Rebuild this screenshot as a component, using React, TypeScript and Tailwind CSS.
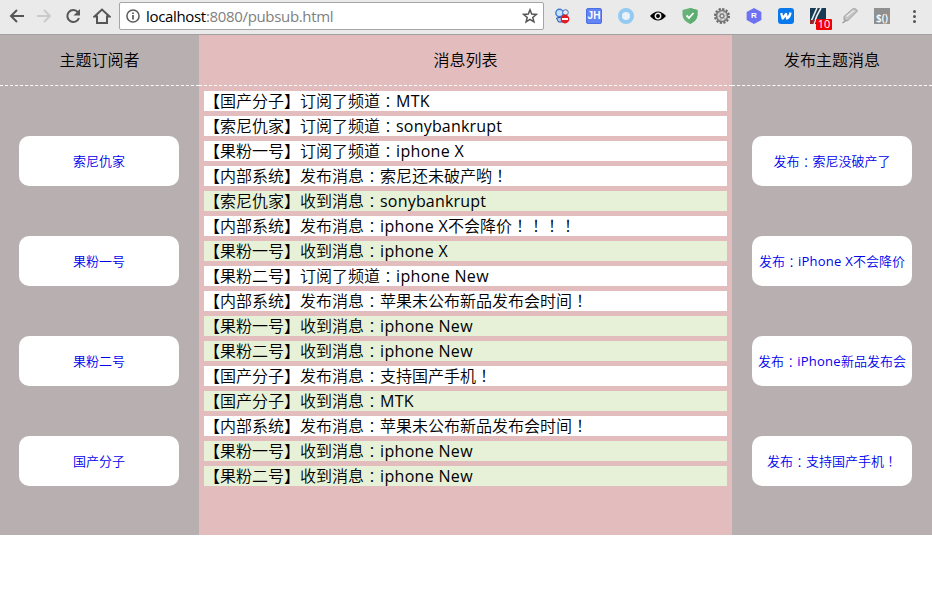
import { Fragment } from "react";

const subscribers = ["索尼仇家", "果粉一号", "果粉二号", "国产分子"];

const publishers = [
  "发布：索尼没破产了",
  "发布：iPhone X不会降价",
  "发布：iPhone新品发布会",
  "发布：支持国产手机！",
];

const messages = [
  "【国产分子】订阅了频道：MTK",
  "【索尼仇家】订阅了频道：sonybankrupt",
  "【果粉一号】订阅了频道：iphone X",
  "【内部系统】发布消息：索尼还未破产哟！",
  "【索尼仇家】收到消息：sonybankrupt",
  "【内部系统】发布消息：iphone X不会降价！！！！",
  "【果粉一号】收到消息：iphone X",
  "【果粉二号】订阅了频道：iphone New",
  "【内部系统】发布消息：苹果未公布新品发布会时间！",
  "【果粉一号】收到消息：iphone New",
  "【果粉二号】收到消息：iphone New",
  "【国产分子】发布消息：支持国产手机！",
  "【国产分子】收到消息：MTK",
  "【内部系统】发布消息：苹果未公布新品发布会时间！",
  "【果粉一号】收到消息：iphone New",
  "【果粉二号】收到消息：iphone New",
];

// Latin runs use a humanist sans; full-width punctuation is centred in its cell.
function Mixed({ text }: { text: string }) {
  return (
    <>
      {text.split(/([A-Za-z ]+|：|！+)/).map((part, i) => {
        if (/^[A-Za-z ]/.test(part)) {
          return (
            <span
              key={i}
              className={`font-['Open_Sans','Noto_Sans',sans-serif] font-normal ${/[A-Z]/.test(part) ? "tracking-[0.02em]" : "tracking-[0.012em]"}`}
            >
              {part}
            </span>
          );
        }
        if (/^[：！]/.test(part)) {
          return (
            <span
              key={i}
              className={`font-['Noto_Sans_CJK_TC',sans-serif] ${part === "：" ? "relative top-px font-light" : ""}`}
            >
              {part}
            </span>
          );
        }
        return <Fragment key={i}>{part}</Fragment>;
      })}
    </>
  );
}

function Toolbar() {
  return (
    <header className="flex h-[35px] items-start border-b border-[#a2a2a2] bg-[#eaeaea]">
      <div className="flex h-8 w-[119px] items-center gap-3 pl-2 text-[#555]">
        <svg width="17" height="16" viewBox="0 0 17 16" fill="none" stroke="currentColor" strokeWidth="2">
          <path d="M16 8H3M9 2L3 8l6 6" />
        </svg>
        <svg width="16" height="16" viewBox="0 0 16 16" fill="none" stroke="#cbcbcb" strokeWidth="2">
          <path d="M0 8h13M7 2l6 6-6 6" />
        </svg>
        <svg width="16" height="16" viewBox="0 0 16 16" fill="none" stroke="currentColor" strokeWidth="2">
          <path d="M13 4.2A6 6 0 1 0 14 10" />
          <path d="M15 1v6.5H8.5z" fill="currentColor" stroke="none" />
        </svg>
        <svg width="18" height="16" viewBox="0 0 18 16" fill="none" stroke="currentColor" strokeWidth="2">
          <path d="M1.500 8.500L9 1.500l7.500 7H14V15H4V8.500z" />
        </svg>
      </div>
      <div className="mt-[2px] flex h-7 w-[425px] items-center rounded-[2px] border border-[#a5a5a5] bg-white pl-[6px] pr-[5px]">
        <svg width="14" height="14" viewBox="0 0 14 14" fill="none" stroke="#5a5a5a" strokeWidth="1.500">
          <circle cx="7" cy="7" r="6.100" />
          <path d="M7 6v4.500M7 3.400v1.600" strokeWidth="1.700" />
        </svg>
        <div className="ml-[6px] flex-1 whitespace-nowrap font-['Open_Sans','Noto_Sans',sans-serif] text-[15px] leading-[26px] tracking-[-0.33px] text-[#808080]">
          <span className="text-black">localhost</span>:8080/pubsub.html
        </div>
        <svg width="16" height="16" viewBox="0 0 16 16" fill="none" stroke="#555" strokeWidth="1.500">
          <path d="M8 1.800l1.700 4.300 4.600.3-3.500 3 1.100 4.500L8 11.400 4.100 13.900l1.100-4.500-3.500-3 4.600-.3z" />
        </svg>
      </div>
      <Extensions />
    </header>
  );
}

function Extensions() {
  return (
    <div className="ml-[10px] flex h-8 items-center gap-4">
      <svg width="16" height="16" viewBox="0 0 16 16">
        <path d="M8 9l5-4M6 4l5 0" stroke="#5a78b0" strokeWidth="1.500" />
        <circle cx="5.500" cy="5" r="3.700" fill="#c5e3ff" stroke="#3d78d8" strokeWidth="1.400" />
        <circle cx="11.500" cy="4.500" r="2.800" fill="#dbe9f8" stroke="#4c6ea8" />
        <path d="M2.500 10l2 4h5L8 9z" fill="#a8d2fa" stroke="#25509e" />
        <circle cx="11" cy="11" r="4.400" fill="#e01b24" />
        <path d="M8 11h6" stroke="#fff" strokeWidth="2" />
      </svg>
      <div className="flex size-4 items-center justify-center rounded-[2px] border border-[#4d6fe0] bg-[#6284f4] font-['Liberation_Sans',sans-serif] text-[10px] font-bold leading-none text-white">
        JH
      </div>
      <div className="size-4 rounded-full border-4 border-[#94caf0] bg-[#e8f2f8]" />
      <svg width="16" height="16" viewBox="0 0 16 16">
        <path d="M0 8Q8-1 16 8Q8 17 0 8z" fill="#000" />
        <circle cx="8" cy="8" r="2.700" fill="none" stroke="#eee" strokeWidth="1.500" />
        <circle cx="8" cy="8" r="1.200" fill="#000" />
      </svg>
      <svg width="16" height="16" viewBox="0 0 16 16">
        <path d="M8 0l7.500 2v5Q15 13 8 16Q1 13 .5 7V2z" fill="#67b279" />
        <path d="M8 0l7.500 2v5Q15 13 8 16z" fill="#5bad70" />
        <path d="M4.500 7.500l2.500 2.500L11.500 5" fill="none" stroke="#fff" strokeWidth="1.800" />
      </svg>
      <svg width="16" height="16" viewBox="0 0 16 16">
        <circle cx="8" cy="8" r="7" fill="none" stroke="#666" strokeWidth="2" strokeDasharray="2.200 1.465" />
        <circle cx="8" cy="8" r="5.600" fill="#b4b4b4" stroke="#777" strokeWidth="1.500" />
        <circle cx="8" cy="8" r="3.700" fill="none" stroke="#ddd" strokeWidth="1.500" strokeDasharray="2.500 1.375" />
        <circle cx="8" cy="8" r="2" fill="#ddd" stroke="#666" />
      </svg>
      <div className="flex h-4 w-4 items-center justify-center bg-[#6c72f2] font-['Liberation_Sans',sans-serif] text-[8px] font-bold leading-none text-white [clip-path:polygon(50%_0,96%_25%,96%_75%,50%_100%,4%_75%,4%_25%)]">
        R
      </div>
      <div className="flex size-4 items-center justify-center rounded-[3px] bg-[#0879ed]">
        <svg width="12" height="10" viewBox="0 0 12 10" fill="none" stroke="#fff" strokeWidth="2.300" strokeLinejoin="round">
          <path d="M1.200 2l1.500 5.500L6 3l1 4.500Q10 6 10.500 1.500" />
        </svg>
      </div>
      <div className="relative size-4">
        <svg width="16" height="16" viewBox="0 0 16 16">
          <path d="M0 0h16v16H0z" fill="#173b53" />
          <path d="M0 16Q3 9 7 0M4 16Q6 8 11 0" fill="none" stroke="#eee" strokeWidth="1.600" />
          <path d="M0 12h5l-2 4H0z" fill="#99252a" />
        </svg>
        <span className="absolute left-[6px] top-[11px] h-[11px] w-4 rounded-[1px] bg-[#f00000] text-center font-['Open_Sans',sans-serif] text-[11px] leading-[10px] text-white">
          10
        </span>
      </div>
      <svg width="16" height="16" viewBox="0 0 16 16">
        <path d="M2 12V8.500L10.500 1Q14-.5 15.500 3L7.500 11 5.500 13z" fill="#c4c4c4" stroke="#999" strokeWidth=".9" />
        <path d="M4.500 8.500l7.500-6" stroke="#ececec" strokeWidth="1.200" />
        <path d="M.5 15l4-3" stroke="#999" strokeWidth="1.500" />
      </svg>
      <div className="flex size-4 items-end justify-center bg-[#909090] font-['Open_Sans',sans-serif] text-[10px] font-semibold leading-[12px] text-white">
        $()
      </div>
      <div className="ml-[6px] flex w-1 flex-col items-center gap-[2px]">
        <i className="size-[3px] rounded-full bg-[#555]" />
        <i className="size-[3px] rounded-full bg-[#555]" />
        <i className="size-[3px] rounded-full bg-[#555]" />
      </div>
    </div>
  );
}

function Heading({ children }: { children: string }) {
  return (
    <h2 className="h-[51px] border-b border-dashed border-white text-center text-base font-[350] leading-[48px]">
      {children}
    </h2>
  );
}

function Side({ title, items, width }: { title: string; items: string[]; width: string }) {
  return (
    <section className={`${width} bg-[#b8afb0]`}>
      <Heading>{title}</Heading>
      <div className="flex flex-col items-start gap-[50px] pt-[50px]">
        {items.map((item) => (
          <button
            key={item}
            className={`h-[50px] w-40 whitespace-nowrap rounded-[10px] bg-white text-center text-[13px] font-[350] leading-[50px] text-[#0000ee] ${width === "w-[199px]" ? "ml-[19px]" : "ml-5"}`}
          >
            <Mixed text={item} />
          </button>
        ))}
      </div>
    </section>
  );
}

export default function App() {
  return (
    <div className="h-[589px] w-[932px] overflow-hidden bg-white font-['Noto_Sans_CJK_SC',sans-serif] text-black">
      <Toolbar />
      <main className="flex h-[500px]">
        <Side title="主题订阅者" items={subscribers} width="w-[199px]" />
        <section className="w-[533px] bg-[#e3bcbd]">
          <Heading>消息列表</Heading>
          <ul className="flex flex-col gap-[5px] p-[5px]">
            {messages.map((m, i) => (
              <li
                key={i}
                className={`h-5 whitespace-nowrap text-base font-[350] leading-[18px] ${m.includes("收到消息") ? "bg-[#e6f1d7]" : "bg-white"}`}
              >
                <Mixed text={m} />
              </li>
            ))}
          </ul>
        </section>
        <Side title="发布主题消息" items={publishers} width="w-[200px]" />
      </main>
    </div>
  );
}
